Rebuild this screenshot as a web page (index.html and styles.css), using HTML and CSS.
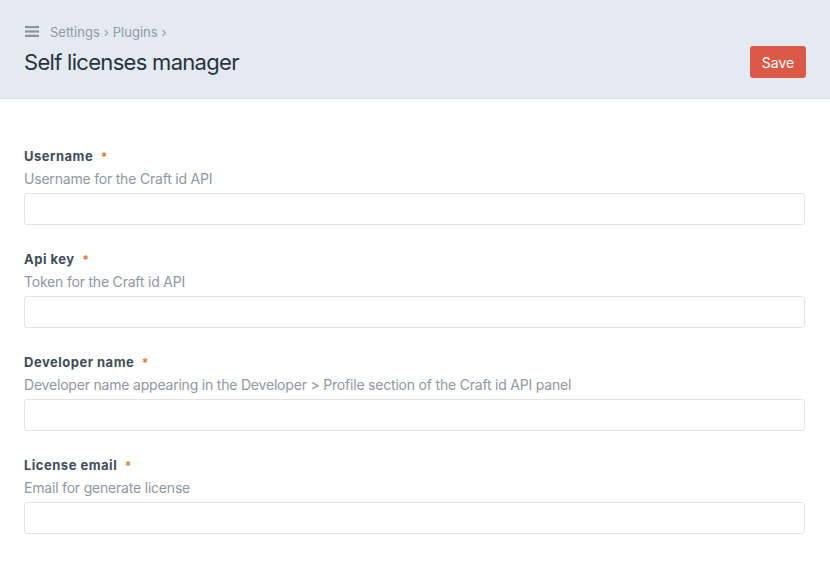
FILE: index.html
```html
<!DOCTYPE html>
<html>
<head>
<meta charset="utf-8">
<link rel="stylesheet" href="styles.css">
</head>
<body>
<header class="header">
  <div class="crumbs">
    <svg class="menu" width="14" height="11" viewBox="0 0 14 11"><rect x="0" y="0" width="14" height="2.2" fill="#8a939d"/><rect x="0" y="4.4" width="14" height="2.2" fill="#8a939d"/><rect x="0" y="8.8" width="14" height="2.2" fill="#8a939d"/></svg>
    <span class="crumb">Settings</span><span class="sep">›</span><span class="crumb">Plugins</span><span class="sep">›</span>
  </div>
  <div class="titlebar">
    <h1 class="title">Self licenses manager</h1>
    <button class="save">Save</button>
  </div>
</header>
<main class="content">
  <div class="field">
    <div class="label">Username <span class="req">*</span></div>
    <div class="desc">Username for the Craft id API</div>
    <input class="input" type="text">
  </div>
  <div class="field">
    <div class="label">Api key <span class="req">*</span></div>
    <div class="desc">Token for the Craft id API</div>
    <input class="input" type="text">
  </div>
  <div class="field">
    <div class="label">Developer name <span class="req">*</span></div>
    <div class="desc">Developer name appearing in the Developer &gt; Profile section of the Craft id API panel</div>
    <input class="input" type="text">
  </div>
  <div class="field">
    <div class="label">License email <span class="req">*</span></div>
    <div class="desc">Email for generate license</div>
    <input class="input" type="text">
  </div>
</main>
</body>
</html>
```
FILE: styles.css
```css
* { box-sizing: border-box; }
body {
  margin: 0;
  background: #fff;
  font-family: "Inter", "Liberation Sans", sans-serif;
  color: #29323d;
}
.header {
  background: #e4eaf1;
  border-bottom: 1px solid #d9dee4;
  height: 99px;
  padding: 23px 24px 0 24px;
}
.crumbs {
  display: flex;
  align-items: center;
  height: 17px;
  font-size: 13px;
  color: #8f98a3;
}
.menu { margin: 0 11px 0 1px; }
.sep { margin: 0 4px; font-size: 13px; }
.titlebar {
  display: flex;
  justify-content: space-between;
  align-items: center;
  margin-top: 6px;
}
.title {
  margin: 0;
  font-size: 22px;
  font-weight: 400;
  color: #29323d;
  letter-spacing: -0.7px;
}
.save {
  background: #da5a47;
  border: none;
  border-radius: 3px;
  color: #fff;
  font-family: inherit;
  font-size: 14px;
  height: 32px;
  width: 56px;
}
.content {
  padding: 48px 25px 0 24px;
}
.field { margin-bottom: 25px; }
.label {
  font-size: 13px;
  font-weight: 700;
  color: #3f4d5a;
  line-height: 18px;
  letter-spacing: 0.5px;
}
.req { color: #da7b32; font-size: 12px; margin-left: 4px; }
.desc {
  font-size: 14px;
  color: #8f98a3;
  line-height: 19px;
  margin-top: 3px;
  margin-bottom: 5px;
  letter-spacing: -0.2px;
}
.input {
  display: block;
  width: 100%;
  height: 32px;
  border: 1px solid #e3e5e8;
  border-radius: 3px;
  background: #fff;
}
```
